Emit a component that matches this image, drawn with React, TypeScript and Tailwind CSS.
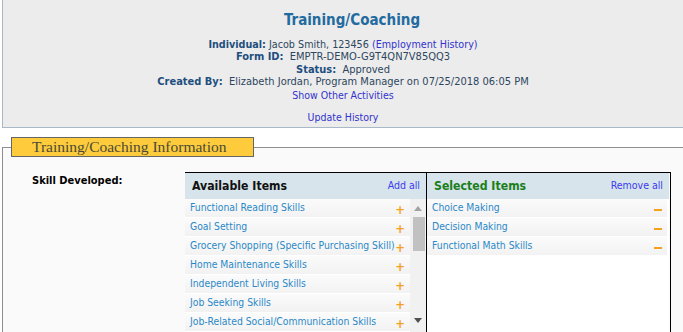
import React from "react";

const font = { fontFamily: '"DejaVu Sans Condensed", "DejaVu Sans", sans-serif' };

const available = [
  "Functional Reading Skills",
  "Goal Setting",
  "Grocery Shopping (Specific Purchasing Skill)",
  "Home Maintenance Skills",
  "Independent Living Skills",
  "Job Seeking Skills",
  "Job-Related Social/Communication Skills",
];

const selected = ["Choice Making", "Decision Making", "Functional Math Skills"];

function Row({ label, sign }: { label: string; sign: "+" | "-" }) {
  return (
    <div className="h-[19px] flex items-center justify-between pl-[5px] pr-[5px] bg-gradient-to-b from-[#fbfbfb] to-[#f2f2f2] border-b border-white">
      <span className="text-[10.3px] text-[#2b88c8] whitespace-nowrap">{label}</span>
      {sign === "+" ? (
        <span className="text-[13px] leading-none font-bold text-[#f5a01f] mt-[3px]">+</span>
      ) : (
        <span className="block w-[8px] h-[2px] bg-[#f5a01f] mt-[3px]" />
      )}
    </div>
  );
}

export default function App() {
  return (
    <div className="w-[683px] h-[332px] overflow-hidden bg-white text-[11px]" style={font}>
      {/* HEADER PANEL */}
      <div className="ml-[2px] h-[128px] bg-[#ececec] border-l border-b border-[#a9b8c8] flex flex-col items-center pt-[9px] leading-[12.4px]">
        <h1 className="text-[15px] leading-[22px] font-bold text-[#236b9f] mb-[8px] pl-[18px]">Training/Coaching</h1>
        <div className="text-[10.7px]">
          <b className="text-[#1e4f7f]">Individual:</b>{" "}
          <span className="text-[#2d4660]">Jacob Smith, 123456</span>{" "}
          <span className="text-[#3333cc]">(Employment History)</span>
        </div>
        <div>
          <b className="text-[#1e4f7f]">Form ID:</b>
          <span className="text-[#2d4660]">&nbsp; EMPTR-DEMO-G9T4QN7V85QQ3</span>
        </div>
        <div>
          <b className="text-[#1e4f7f]">Status:</b>
          <span className="text-[#2d4660]">&nbsp; Approved</span>
        </div>
        <div>
          <b className="text-[#1e4f7f]">Created By:</b>
          <span className="text-[#2d4660]">&nbsp; Elizabeth Jordan, Program Manager on 07/25/2018 06:05 PM</span>
        </div>
        <div className="text-[#3333cc] text-[10.5px]">Show Other Activities</div>
        <div className="text-[#3333cc] text-[10.5px] mt-[10px]">Update History</div>
      </div>

      {/* FIELDSET */}
      <fieldset className="ml-[2px] mt-[9px] border-l border-t border-[#8f8f8f] bg-[#fafafa] h-[260px]">
        <legend
          className="ml-[8px] w-[243px] h-[20px] bg-[#fdcb3b] border border-[#666] pl-[20px] text-[15.5px] leading-[18px] text-[#4a4a38]"
          style={{ fontFamily: '"Liberation Serif", serif' }}
        >
          Training/Coaching Information
        </legend>
        <div className="flex pl-[29px] pt-[15px]">
          <div className="w-[153px] font-bold text-black pt-[1px]">Skill Developed:</div>
          <div className="flex border-t border-r border-black w-[486px] h-[170px]">
            {/* AVAILABLE */}
            <div className="w-[242px] border-r border-black bg-[#f7f7f7]">
              <div className="h-[26px] bg-[#d7e4eb] flex items-center justify-between pl-[7px] pr-[6px]">
                <span className="text-[12.2px] font-bold text-[#111]">Available Items</span>
                <span className="text-[10.5px] text-[#3b3bf0]">Add all</span>
              </div>
              <div className="flex">
                <div className="w-[225px]">
                  {available.map((a) => (
                    <Row key={a} label={a} sign="+" />
                  ))}
                </div>
                <div className="w-[16px] h-[133px] bg-[#f1f1f1] flex flex-col items-center pt-[7px] pb-[9px]">
                  <svg width="8" height="5" viewBox="0 0 8 5" className="shrink-0">
                    <path d="M0 5 L4 0 L8 5 Z" fill="#a3a3a3" />
                  </svg>
                  <div className="mt-[6px] ml-[2px] w-[12px] h-[34px] bg-[#c1c1c1] shrink-0" />
                  <div className="flex-1" />
                  <svg width="8" height="5" viewBox="0 0 8 5" className="shrink-0">
                    <path d="M0 0 L8 0 L4 5 Z" fill="#505050" />
                  </svg>
                </div>
              </div>
            </div>
            {/* SELECTED */}
            <div className="w-[242px] bg-white">
              <div className="h-[26px] bg-[#d7e4eb] flex items-center justify-between pl-[7px] pr-[6px]">
                <span className="text-[12.2px] font-bold text-[#1a7f1a]">Selected Items</span>
                <span className="text-[10.5px] text-[#3b3bf0]">Remove all</span>
              </div>
              <div className="pr-[2px]">
                {selected.map((s) => (
                  <Row key={s} label={s} sign="-" />
                ))}
              </div>
            </div>
          </div>
        </div>
      </fieldset>
    </div>
  );
}
